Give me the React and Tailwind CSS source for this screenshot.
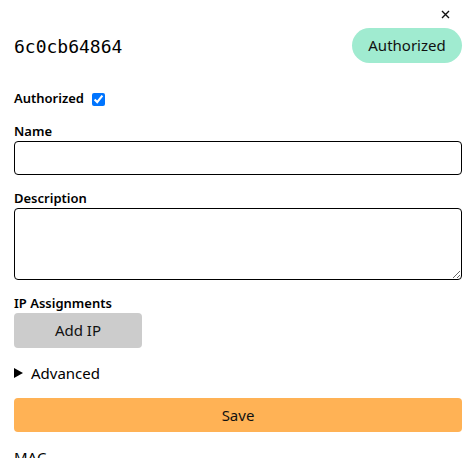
export default function App() {
  return (
    <div className="w-[473px] h-[458px] overflow-hidden bg-white text-black font-['Noto_Sans',sans-serif] pl-[14px] pr-[11px]">
      <div className="flex justify-end h-[28px]">
        <button className="mt-[10px] mr-[12px] w-[9px] h-[9px] flex items-center justify-center">
          <svg width="9" height="9" viewBox="0 0 9 9" className="block">
            <path d="M1 1 L8 8 M8 1 L1 8" stroke="#111" strokeWidth="1.4" />
          </svg>
        </button>
      </div>

      <div className="flex items-center justify-between h-[35px]">
        <h2 className="font-['DejaVu_Sans_Mono',monospace] text-[18px] leading-none mt-[2px]">6c0cb64864</h2>
        <span className="h-[35px] w-[110px] rounded-full bg-[#a0ebd0] flex items-center justify-center text-[15px] text-[#111]">
          Authorized
        </span>
      </div>

      <label className="mt-[26px] h-[20px] flex items-center gap-[8px] text-[13px] font-semibold">
        Authorized
        <input type="checkbox" defaultChecked className="w-[13px] h-[13px] m-0" />
      </label>

      <div className="mt-[12px] h-[20px] text-[13px] font-semibold leading-[20px]">Name</div>
      <input type="text" className="block w-full h-[34px] border border-black rounded-[4px] px-2" />

      <div className="mt-[13px] h-[20px] text-[13px] font-semibold leading-[20px]">Description</div>
      <textarea className="block w-full h-[72px] border border-black rounded-[4px] px-2" />

      <div className="mt-[13px] h-[20px] text-[13px] font-semibold leading-[20px]">IP Assignments</div>
      <button className="block w-[128px] h-[35px] rounded-[4px] bg-[#cccccc] text-[15px] text-[#111]">Add IP</button>

      <div className="mt-[14px] h-[22px] flex items-center gap-[8px] text-[15px] leading-[22px]">
        <span className="w-0 h-0 border-y-[5px] border-y-transparent border-l-[9px] border-l-black" />
        <span>Advanced</span>
      </div>

      <button className="mt-[14px] block w-full h-[34px] rounded-[4px] bg-[#ffb255] text-[15px] text-[#111]">Save</button>

      <div className="mt-[14px] h-[22px] text-[15px] leading-[22px]">MAC</div>
    </div>
  );
}
